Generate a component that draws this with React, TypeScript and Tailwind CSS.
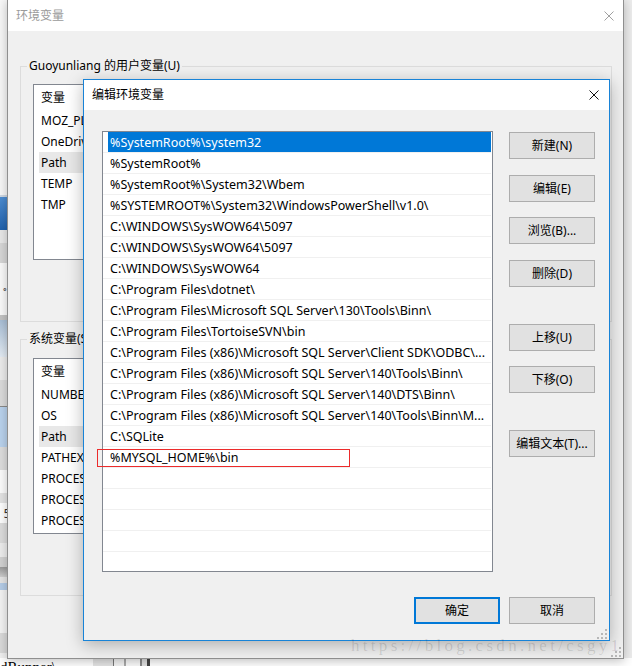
import React from "react";

const FONT = "font-['Noto_Sans','Noto_Sans_CJK_SC',sans-serif]";

const pathRows = [
  "%SystemRoot%\\system32",
  "%SystemRoot%",
  "%SystemRoot%\\System32\\Wbem",
  "%SYSTEMROOT%\\System32\\WindowsPowerShell\\v1.0\\",
  "C:\\WINDOWS\\SysWOW64\\5097",
  "C:\\WINDOWS\\SysWOW64\\5097",
  "C:\\WINDOWS\\SysWOW64",
  "C:\\Program Files\\dotnet\\",
  "C:\\Program Files\\Microsoft SQL Server\\130\\Tools\\Binn\\",
  "C:\\Program Files\\TortoiseSVN\\bin",
  "C:\\Program Files (x86)\\Microsoft SQL Server\\Client SDK\\ODBC\\...",
  "C:\\Program Files (x86)\\Microsoft SQL Server\\140\\Tools\\Binn\\",
  "C:\\Program Files (x86)\\Microsoft SQL Server\\140\\DTS\\Binn\\",
  "C:\\Program Files (x86)\\Microsoft SQL Server\\140\\Tools\\Binn\\M...",
  "C:\\SQLite",
  "%MYSQL_HOME%\\bin",
  "",
  "",
  "",
  "",
  "",
];

const userVars = ["MOZ_PLUGIN_PATH", "OneDrive", "Path", "TEMP", "TMP"];
const sysVars = [
  "NUMBER_OF_PROCESSORS",
  "OS",
  "Path",
  "PATHEXT",
  "PROCESSOR_ARCHITECTURE",
  "PROCESSOR_IDENTIFIER",
  "PROCESSOR_LEVEL",
];

function CloseX({ color }: { color: string }) {
  return (
    <svg width="10" height="10" viewBox="0 0 10 10" className="block">
      <path d="M0.5 0.5 L9.5 9.5 M9.5 0.5 L0.5 9.5" stroke={color} strokeWidth="1" fill="none" />
    </svg>
  );
}

function Grip() {
  return (
    <svg width="10" height="10" viewBox="0 0 10 10" className="block">
      <rect x="8" y="0" width="2" height="2" fill="#b8b8b8" />
      <rect x="4" y="4" width="2" height="2" fill="#b8b8b8" />
      <rect x="8" y="4" width="2" height="2" fill="#b8b8b8" />
      <rect x="0" y="8" width="2" height="2" fill="#b8b8b8" />
      <rect x="4" y="8" width="2" height="2" fill="#b8b8b8" />
      <rect x="8" y="8" width="2" height="2" fill="#b8b8b8" />
    </svg>
  );
}

function Btn({ label, className = "" }: { label: string; className?: string }) {
  return (
    <div
      className={`w-[86px] h-[27px] shrink-0 bg-[#e1e1e1] border border-[#adadad] flex items-center justify-center text-[12px] text-black ${className}`}
    >
      {label}
    </div>
  );
}

function VarList({ vars }: { vars: string[] }) {
  return (
    <div className="ml-[12px] w-[566px] h-[176px] border border-[#828790] bg-white overflow-hidden">
      <div className="h-[25px] flex items-center pl-[7px] text-[12px] text-black">
        <span>变量</span>
      </div>
      {vars.map((v, i) => (
        <div key={i} className="h-[21px] flex items-center">
          <div
            className={`h-[21px] w-[190px] ml-[5px] pl-[2px] flex items-center text-[12px] text-black whitespace-nowrap overflow-hidden ${
              v === "Path" ? "bg-[#e8e8e8]" : ""
            }`}
          >
            {v}
          </div>
        </div>
      ))}
    </div>
  );
}

export default function App() {
  return (
    <div className={`relative w-[632px] h-[666px] overflow-hidden bg-[#ebebeb] ${FONT}`}>
      {/* desktop background */}
      <div className="flex flex-col w-full h-full">
        <div className="flex flex-1">
          <div className="w-[8px] flex flex-col overflow-hidden">
            <div className="h-[195px] bg-[#f8f8f8]" />
            <div className="h-[2px] bg-[#cfd8e3]" />
            <div className="h-[33px] bg-gradient-to-b from-[#4d8dd2] to-[#1f62ae]" />
            <div className="h-[13px] bg-[#e9e9e9]" />
            <div className="h-[20px] bg-[#d7d7d7]" />
            <div className="h-[52px] bg-[#fbfbfb] flex items-center justify-end text-[9px] leading-none text-[#555]">∘</div>
            <div className="h-[5px] bg-[#c3c3c3]" />
            <div className="h-[37px] bg-gradient-to-b from-[#a9bfd6] to-[#e4ecf4]" />
            <div className="h-[23px] bg-[#ededed]" />
            <div className="h-[26px] bg-[#dcdcdc]" />
            <div className="h-[1px] bg-[#8a8a8a]" />
            <div className="h-[40px] bg-[#bad3ee]" />
            <div className="h-[23px] bg-[#dedede]" />
            <div className="h-[23px] bg-[#fdfdfd]" />
            <div className="h-[10px] bg-[#e4e4e4]" />
            <div className="h-[20px] bg-white flex items-center justify-end text-[13px] leading-none text-[#333] overflow-hidden">
              <span className="mr-[-3px]">5</span>
            </div>
            <div className="h-[20px] bg-[#dddddd]" />
            <div className="h-[14px] bg-[#eeeeee]" />
            <div className="h-[10px] bg-[#d2d2d2]" />
            <div className="h-[10px] bg-gradient-to-b from-[#9a9a9a] to-[#cfcfcf]" />
            <div className="h-[6px] bg-[#e6e6e6]" />
            <div className="h-[7px] bg-[#b5cde8]" />
            <div className="h-[43px] bg-[#f4f4f4]" />
            <div className="h-[20px] bg-[#dadada]" />
            <div className="flex-1 bg-[#f0f0f0]" />
          </div>
          <div className="flex-1 bg-[#ececec]" />
        </div>
        <div className="h-[8px] bg-white flex items-start overflow-hidden">
          <span className="font-['Liberation_Serif',serif] text-[15px] leading-[15px] mt-[2px] text-black w-[93px]">dRunner\</span>
          <div className="w-[20px] h-full bg-[#e4e4e4]" />
          <div className="w-[1px] h-full bg-[#777]" />
          <div className="w-[10px] h-full bg-[#f4f4f4]" />
          <div className="w-[2px] h-full bg-[#aaa]" />
          <div className="w-[14px] h-full bg-[#fafafa]" />
          <div className="w-[2px] h-full bg-[#8a8a8a]" />
          <div className="w-[5px] h-full bg-[#e0e0e0]" />
          <div className="w-[3px] h-full bg-[#444]" />
          <div className="flex-1 h-full bg-white" />
        </div>
      </div>

      {/* outer window: 环境变量 */}
      <div className="absolute left-[7px] top-[-1px] w-[617px] h-[660px] border border-[#8f8f8f] bg-[#f0f0f0] shadow-[0_2px_10px_rgba(0,0,0,0.25)] flex flex-col">
        <div className="h-[31px] shrink-0 bg-white flex items-center justify-between pl-[8px] pr-[9px]">
          <span className="text-[12px] text-[#9a9a9a]">环境变量</span>
          <CloseX color="#a0a0a0" />
        </div>
        <div className="flex-1 pl-[12px] pt-[27px] text-[12px] text-black">
          <fieldset className="w-[592px] h-[264px] border border-[#dcdcdc]">
            <legend className="ml-[6px] px-[2px] leading-[16px] text-[12px]">Guoyunliang 的用户变量(U)</legend>
            <div className="mt-[10px]">
              <VarList vars={userVars} />
            </div>
          </fieldset>
          <fieldset className="mt-[9px] w-[592px] h-[265px] border border-[#dcdcdc]">
            <legend className="ml-[6px] px-[2px] leading-[16px] text-[12px]">系统变量(S)</legend>
            <div className="mt-[11px]">
              <VarList vars={sysVars} />
            </div>
          </fieldset>
        </div>
        <div className="absolute right-[2px] bottom-[1px]">
          <Grip />
        </div>
      </div>

      {/* dialog: 编辑环境变量 */}
      <div className="absolute left-[83px] top-[79px] w-[527px] h-[562px] border border-[#1883d7] bg-[#f0f0f0] shadow-[0_4px_16px_rgba(0,0,0,0.28)] flex flex-col">
        <div className="h-[30px] shrink-0 bg-white flex items-center justify-between pl-[8px] pr-[10px]">
          <span className="text-[12px] text-black">编辑环境变量</span>
          <CloseX color="#111" />
        </div>
        <div className="flex-1 flex flex-col pt-[21px] pl-[18px] pr-[14px] pb-[16px]">
          <div className="flex gap-[16px]">
            <div className="w-[391px] h-[441px] shrink-0 border border-[#828790] bg-white overflow-hidden">
              {pathRows.map((r, i) => (
                <div key={i} className="h-[21px] mr-[1px] border-b border-[#f0f0f0] flex">
                  <div
                    className={`h-[20px] flex-1 ml-[5px] pl-[2px] pt-[3px] flex items-center text-[12.5px] whitespace-nowrap overflow-hidden ${
                      i === 0 ? "bg-[#0078d7] text-white" : "text-black"
                    }`}
                  >
                    {r}
                  </div>
                </div>
              ))}
            </div>
            <div className="w-[86px] flex flex-col">
              <Btn label="新建(N)" className="mt-[1px]" />
              <Btn label="编辑(E)" className="mt-[16px]" />
              <Btn label="浏览(B)..." className="mt-[15px]" />
              <Btn label="删除(D)" className="mt-[16px]" />
              <Btn label="上移(U)" className="mt-[37px]" />
              <Btn label="下移(O)" className="mt-[15px]" />
              <Btn label="编辑文本(T)..." className="mt-[37px]" />
            </div>
          </div>
          <div className="mt-[25px] flex justify-end gap-[9px]">
            <div className="w-[86px] h-[27px] bg-[#e1e1e1] border-2 border-[#0078d7] flex items-center justify-center text-[12px] text-black">
              确定
            </div>
            <Btn label="取消" />
          </div>
        </div>
        <div className="absolute right-[2px] bottom-[1px]">
          <Grip />
        </div>
      </div>

      {/* red highlight box */}
      <div className="absolute left-[97px] top-[449px] w-[253px] h-[18px] border border-[#ec2b2b] pointer-events-none" />

      {/* watermark */}
      <div className="absolute left-[351px] top-[636px] font-['Liberation_Serif',serif] text-[17px] leading-[20px] tracking-[3.3px] text-[rgba(0,0,0,0.13)] whitespace-nowrap pointer-events-none">
        https://blog.csdn.net/csgy1
      </div>
    </div>
  );
}
